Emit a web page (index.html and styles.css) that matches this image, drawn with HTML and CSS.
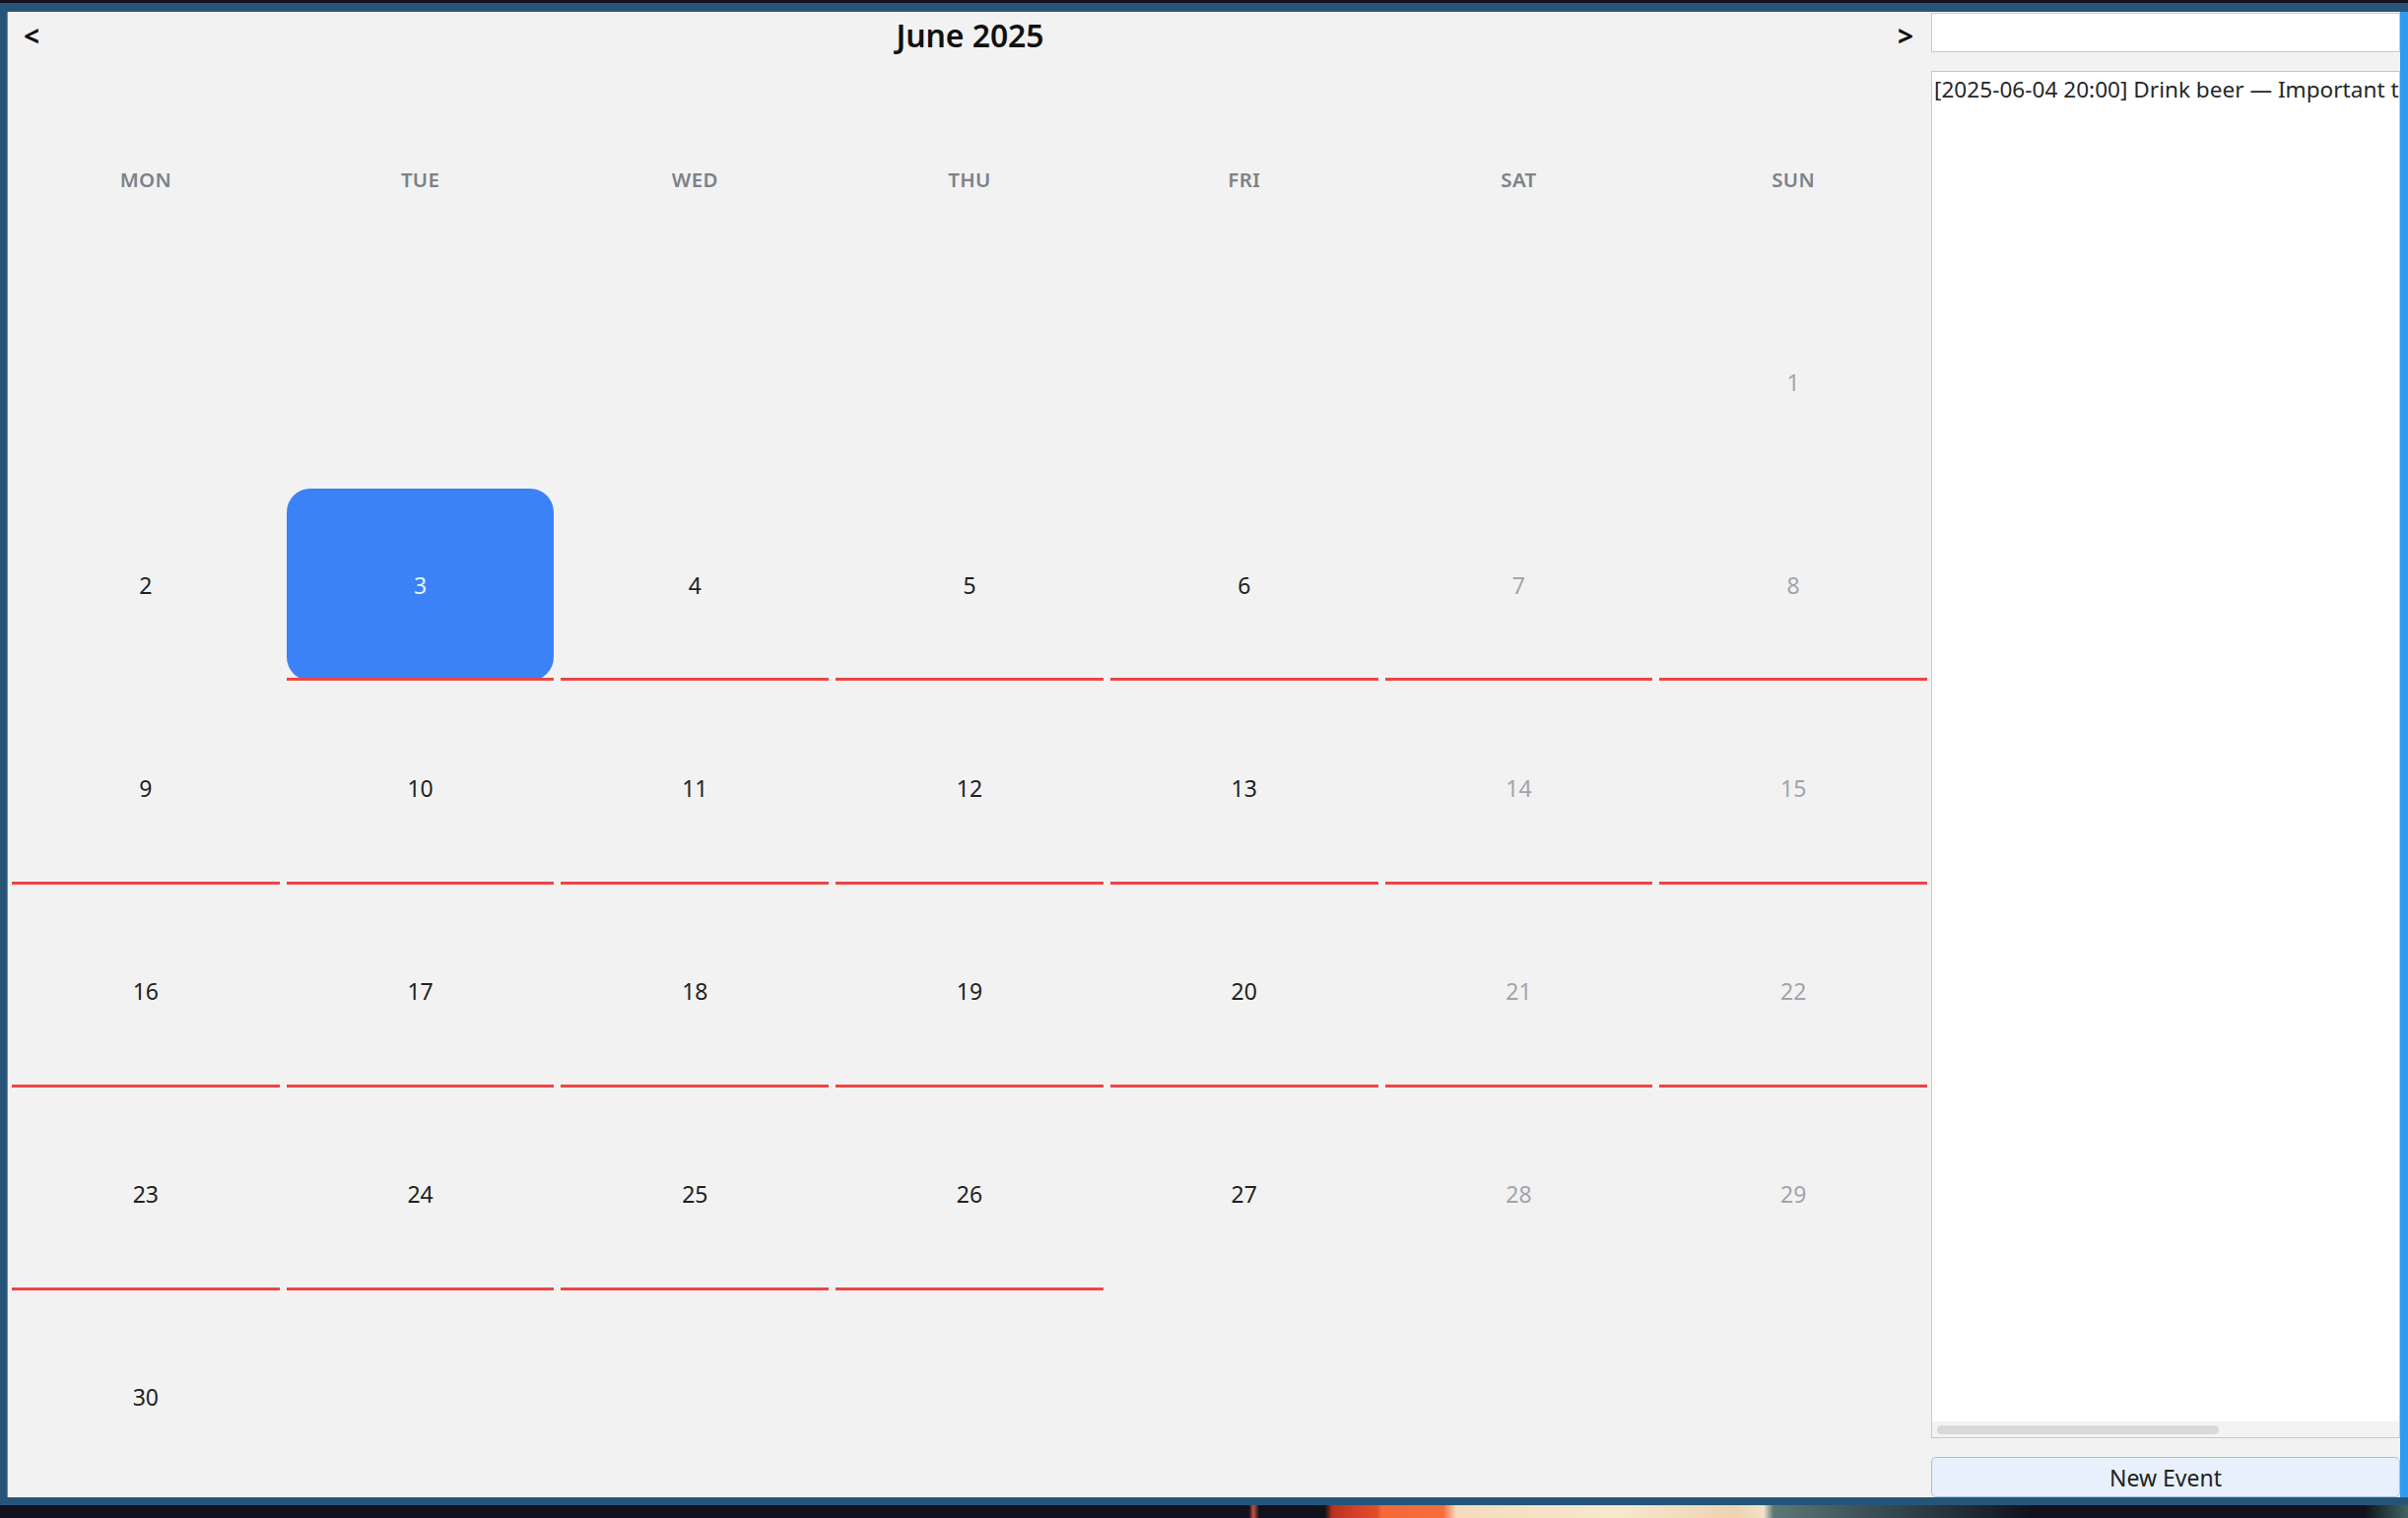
FILE: index.html
```html
<!DOCTYPE html>
<html lang="en">
<head>
<meta charset="utf-8">
<title>Calendar</title>
<link rel="stylesheet" href="styles.css">
</head>
<body>
<div class="desktop">
  <div class="topstrip"></div>
  <div class="window">
    <div class="frame-top"></div>
    <div class="frame-mid">
      <div class="edge-left"></div>
      <div class="content">
        <section class="calendar">
          <header class="nav">
            <span class="arrow">&lt;</span>
            <span class="title">June 2025</span>
            <span class="arrow">&gt;</span>
          </header>
          <div class="grid">
            <div class="cell wk">MON</div>
            <div class="cell wk">TUE</div>
            <div class="cell wk">WED</div>
            <div class="cell wk">THU</div>
            <div class="cell wk">FRI</div>
            <div class="cell wk">SAT</div>
            <div class="cell wk">SUN</div>

            <div class="cell"></div>
            <div class="cell"></div>
            <div class="cell"></div>
            <div class="cell"></div>
            <div class="cell"></div>
            <div class="cell"></div>
            <div class="cell day muted">1</div>

            <div class="cell day">2</div>
            <div class="cell day sel ul">3</div>
            <div class="cell day ul">4</div>
            <div class="cell day ul">5</div>
            <div class="cell day ul">6</div>
            <div class="cell day muted ul">7</div>
            <div class="cell day muted ul">8</div>

            <div class="cell day ul">9</div>
            <div class="cell day ul">10</div>
            <div class="cell day ul">11</div>
            <div class="cell day ul">12</div>
            <div class="cell day ul">13</div>
            <div class="cell day muted ul">14</div>
            <div class="cell day muted ul">15</div>

            <div class="cell day ul">16</div>
            <div class="cell day ul">17</div>
            <div class="cell day ul">18</div>
            <div class="cell day ul">19</div>
            <div class="cell day ul">20</div>
            <div class="cell day muted ul">21</div>
            <div class="cell day muted ul">22</div>

            <div class="cell day ul">23</div>
            <div class="cell day ul">24</div>
            <div class="cell day ul">25</div>
            <div class="cell day ul">26</div>
            <div class="cell day">27</div>
            <div class="cell day muted">28</div>
            <div class="cell day muted">29</div>

            <div class="cell day">30</div>
            <div class="cell"></div>
            <div class="cell"></div>
            <div class="cell"></div>
            <div class="cell"></div>
            <div class="cell"></div>
            <div class="cell"></div>
          </div>
        </section>
        <aside class="panel">
          <input class="search" type="text" aria-label="Search">
          <div class="list">
            <div class="items">
              <div class="item">[2025-06-04 20:00] Drink beer — Important to stay hydrated</div>
            </div>
            <div class="hscroll"><div class="handle"></div></div>
          </div>
          <button class="btn" type="button">New Event</button>
        </aside>
      </div>
      <div class="edge-right"></div>
    </div>
    <div class="frame-bottom"></div>
  </div>
  <div class="wallpaper"></div>
</div>
</body>
</html>
```

FILE: styles.css
```css
* { box-sizing: border-box; }

html, body {
  margin: 0;
  padding: 0;
  width: 2444px;
  height: 1541px;
  overflow: hidden;
  background: #12121c;
  font-family: "Noto Sans", "Open Sans", sans-serif;
}

.desktop {
  width: 2444px;
  height: 1541px;
  display: flex;
  flex-direction: column;
}

.topstrip {
  flex: 0 0 3px;
  background: #14131e;
}

.window {
  flex: 0 0 1525px;
  display: flex;
  flex-direction: column;
}

.frame-top {
  flex: 0 0 9px;
  background: #27557a;
}

.frame-mid {
  flex: 0 0 1508px;
  display: flex;
  min-width: 0;
}

.edge-left {
  flex: 0 0 8px;
  background: #27557a;
  border-right: 1px solid #6f8ea8;
}

.edge-right {
  flex: 0 0 8px;
  background: #2f9bef;
}

.frame-bottom {
  flex: 0 0 8px;
  background: #27557a;
}

.wallpaper {
  flex: 0 0 13px;
  background: linear-gradient(to right,
    #12121c 0px, #12121c 1262px, #141420 1268px, #c9513f 1272px, #12121c 1278px,
    #12121c 1345px, #b8321f 1352px, #d8432a 1380px, #e04e2c 1398px,
    #f4683a 1402px, #f66d3b 1465px, #f3dcbe 1478px, #f7e8cf 1640px,
    #ecd4b4 1760px, #f2e2c8 1790px, #5c7876 1800px, #3a4f54 1900px,
    #12121c 2060px, #12121c 2400px, #3f6562 2444px);
}

.content {
  flex: 1 1 0;
  min-width: 0;
  display: flex;
  background: #f2f2f2;
}

/* Calendar */
.calendar {
  flex: 0 0 1950px;
  display: flex;
  flex-direction: column;
}

.nav {
  flex: 0 0 48px;
  display: grid;
  grid-template-columns: 40px 1fr 40px;
  align-items: center;
  padding: 0 16px;
  color: #111;
}

.arrow {
  font-size: 28px;
  font-weight: 700;
  line-height: 1;
}

.nav .arrow:last-child {
  text-align: right;
}

.title {
  text-align: center;
  font-size: 32px;
  font-weight: 600;
  line-height: 1;
  letter-spacing: -0.1px;
  padding-left: 3px;
}

.grid {
  flex: 1;
  margin: 24px 2px 4px 4px;
  display: grid;
  grid-template-columns: repeat(7, 1fr);
  grid-template-rows: repeat(7, 1fr);
  column-gap: 7px;
  row-gap: 11px;
}

.cell {
  position: relative;
  display: flex;
  align-items: center;
  justify-content: center;
  font-size: 23px;
  color: #222;
}

.wk {
  font-size: 20.5px;
  font-weight: 600;
  color: #7c828a;
  letter-spacing: 0.3px;
}

.muted {
  color: #a0a5ad;
}

.sel {
  background: #3b82f6;
  border-radius: 24px;
  color: #e9f0ff;
}

.ul::after {
  content: "";
  position: absolute;
  left: 0;
  right: 0;
  bottom: 0;
  height: 3px;
  background: #ef4444;
}

/* Right panel */
.panel {
  flex: 1 1 0;
  min-width: 0;
  margin-left: 2px;
  padding-top: 1px;
  display: flex;
  flex-direction: column;
  gap: 19px;
}

.search {
  flex: 0 0 40px;
  width: 100%;
  min-width: 0;
  margin: 0;
  padding: 0 6px;
  border: 1px solid #c8c8c8;
  background: #fff;
  font: inherit;
  font-size: 23px;
  outline: none;
}

.list {
  flex: 1 1 0;
  min-width: 0;
  min-height: 0;
  border: 1px solid #c8c8c8;
  background: #fff;
  display: flex;
  flex-direction: column;
  overflow: hidden;
}

.items {
  flex: 1 1 0;
  min-width: 0;
  overflow: hidden;
  padding: 2px 0 0 2px;
}

.item {
  white-space: nowrap;
  overflow: hidden;
  font-size: 22.6px;
  line-height: 31px;
  color: #262626;
}

.hscroll {
  flex: 0 0 16px;
  background: #f3f3f3;
  padding: 4px 5px 3px 5px;
}

.handle {
  width: 286px;
  height: 9px;
  border-radius: 5px;
  background: #d9d9d9;
}

.btn {
  flex: 0 0 41px;
  width: 100%;
  margin: 0;
  border: 1px solid #9dc2e6;
  border-radius: 5px;
  background: #e8f1fb;
  font: inherit;
  font-size: 23px;
  color: #222;
  padding: 0;
}
```
